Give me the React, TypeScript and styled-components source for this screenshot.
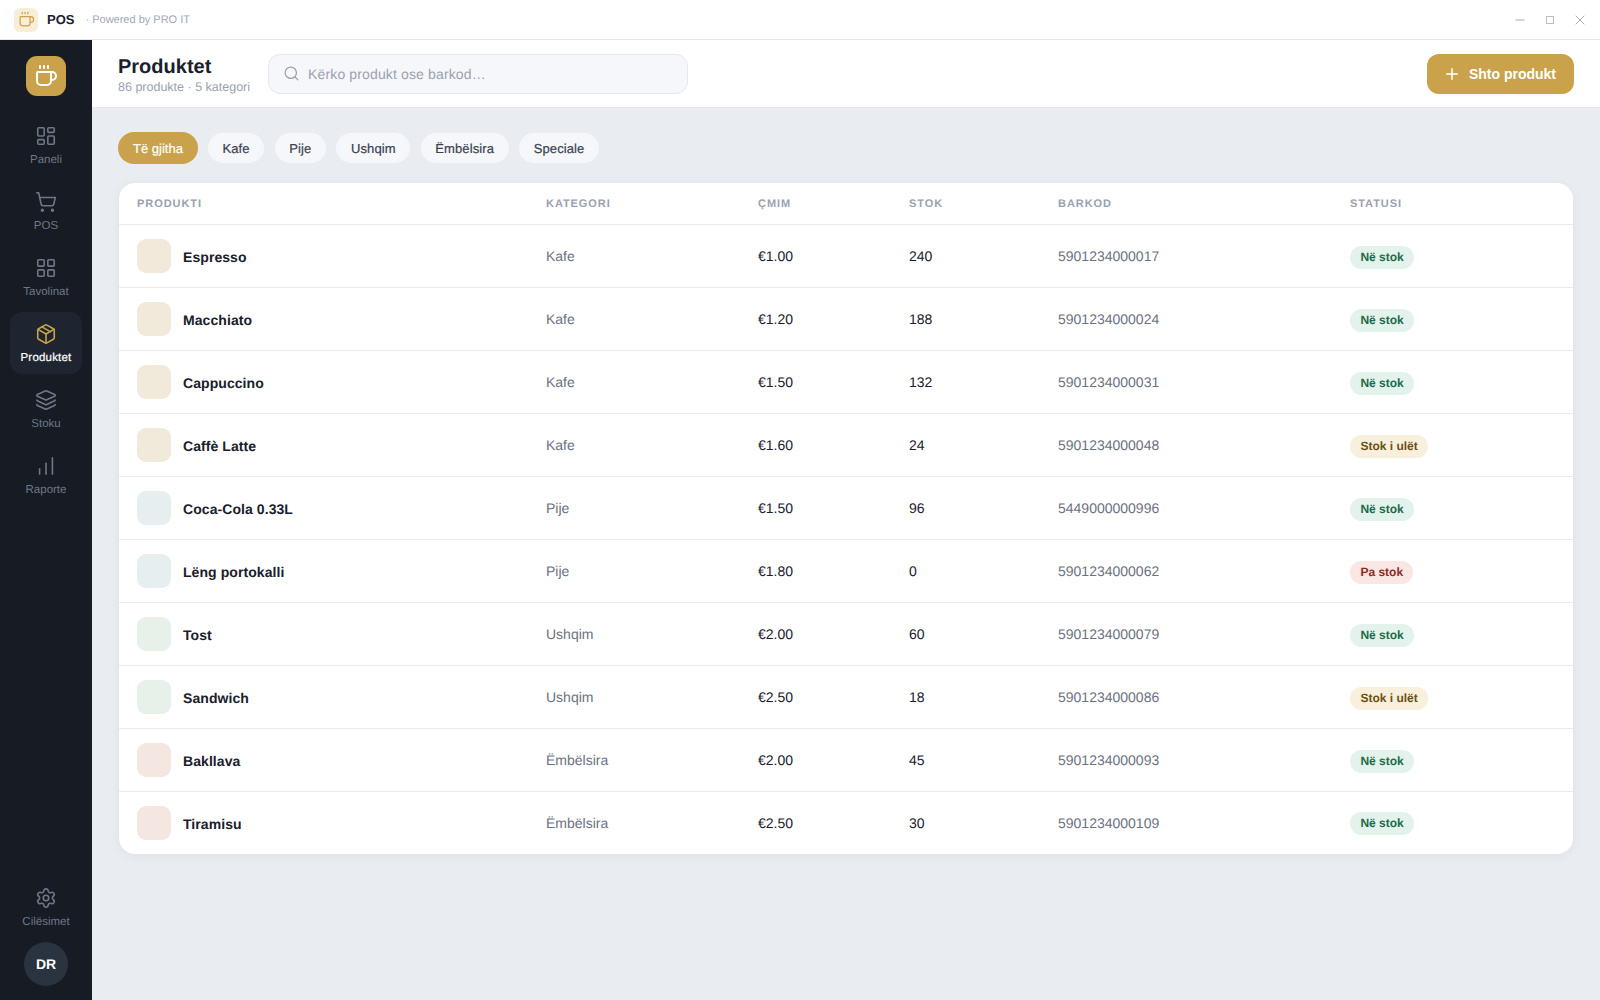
import {
  ChartNoAxesColumnIncreasing,
  Coffee,
  Layers,
  LayoutDashboard,
  LayoutGrid,
  LucideIcon,
  Minus,
  Package,
  Plus,
  Search,
  Settings,
  ShoppingCart,
  X,
} from "lucide-react";
import styled, { createGlobalStyle } from "styled-components";

type Status = "in" | "low" | "out";
type Tint = "coffee" | "drink" | "food" | "sweet";

type Product = {
  name: string;
  category: string;
  price: string;
  stock: number;
  barcode: string;
  status: Status;
  tint: Tint;
};

const products: Product[] = [
  { name: "Espresso", category: "Kafe", price: "€1.00", stock: 240, barcode: "5901234000017", status: "in", tint: "coffee" },
  { name: "Macchiato", category: "Kafe", price: "€1.20", stock: 188, barcode: "5901234000024", status: "in", tint: "coffee" },
  { name: "Cappuccino", category: "Kafe", price: "€1.50", stock: 132, barcode: "5901234000031", status: "in", tint: "coffee" },
  { name: "Caffè Latte", category: "Kafe", price: "€1.60", stock: 24, barcode: "5901234000048", status: "low", tint: "coffee" },
  { name: "Coca-Cola 0.33L", category: "Pije", price: "€1.50", stock: 96, barcode: "5449000000996", status: "in", tint: "drink" },
  { name: "Lëng portokalli", category: "Pije", price: "€1.80", stock: 0, barcode: "5901234000062", status: "out", tint: "drink" },
  { name: "Tost", category: "Ushqim", price: "€2.00", stock: 60, barcode: "5901234000079", status: "in", tint: "food" },
  { name: "Sandwich", category: "Ushqim", price: "€2.50", stock: 18, barcode: "5901234000086", status: "low", tint: "food" },
  { name: "Bakllava", category: "Ëmbëlsira", price: "€2.00", stock: 45, barcode: "5901234000093", status: "in", tint: "sweet" },
  { name: "Tiramisu", category: "Ëmbëlsira", price: "€2.50", stock: 30, barcode: "5901234000109", status: "in", tint: "sweet" },
];

const navItems: { label: string; icon: LucideIcon; active?: boolean }[] = [
  { label: "Paneli", icon: LayoutDashboard },
  { label: "POS", icon: ShoppingCart },
  { label: "Tavolinat", icon: LayoutGrid },
  { label: "Produktet", icon: Package, active: true },
  { label: "Stoku", icon: Layers },
  { label: "Raporte", icon: ChartNoAxesColumnIncreasing },
];

const chips = ["Të gjitha", "Kafe", "Pije", "Ushqim", "Ëmbëlsira", "Speciale"];
const columns = ["Produkti", "Kategori", "Çmim", "Stok", "Barkod", "Statusi"];
const columnWidths = [409, 212, 151, 149, 292, 241];

const statusLabels: Record<Status, string> = {
  in: "Në stok",
  low: "Stok i ulët",
  out: "Pa stok",
};
const statusColors: Record<Status, { bg: string; fg: string }> = {
  in: { bg: "#e3f3ec", fg: "#1c6b4a" },
  low: { bg: "#f8efdc", fg: "#6b4f14" },
  out: { bg: "#fae6e3", fg: "#8f2a1e" },
};
const tintColors: Record<Tint, string> = {
  coffee: "#f1e9d9",
  drink: "#e6eef0",
  food: "#e8f0ea",
  sweet: "#f4e7e1",
};

const GlobalStyle = createGlobalStyle`
  html, body {
    margin: 0;
    height: 100%;
  }
  body {
    font-family: "Liberation Sans", Arial, sans-serif;
    text-rendering: geometricPrecision;
    -webkit-font-smoothing: antialiased;
    background: #e9ecf1;
    color: #1a202c;
  }
  #root {
    height: 100%;
  }
`;

const Shell = styled.div`
  display: flex;
  flex-direction: column;
  height: 1000px;
  overflow: hidden;
`;
const TitleBar = styled.div`
  flex: none;
  display: flex;
  align-items: center;
  height: 40px;
  box-sizing: border-box;
  padding: 0 12px 0 14px;
  background: #fff;
  border-bottom: 1px solid #e4e7ec;
`;
const TitleLogo = styled.div`
  display: flex;
  align-items: center;
  justify-content: center;
  width: 24px;
  height: 24px;
  border-radius: 6px;
  background: #f8eed8;
  color: #c9a24b;
`;
const AppName = styled.span`
  margin-left: 9px;
  font-size: 13px;
  font-weight: 700;
  color: #1a202c;
`;
const Powered = styled.span`
  margin-left: 11px;
  font-size: 11px;
  color: #a0a8b5;
`;
const WindowControls = styled.div`
  margin-left: auto;
  display: flex;
  align-items: center;
  gap: 14px;
  color: #a6adb9;
`;
const WindowButton = styled.div`
  display: flex;
  align-items: center;
  justify-content: center;
  width: 16px;
  height: 16px;
`;
const MaximizeGlyph = styled.div`
  width: 6px;
  height: 6px;
  border: 1px solid #b8bec9;
`;
const Body = styled.div`
  flex: 1;
  display: flex;
  min-height: 0;
`;
const Sidebar = styled.aside`
  flex: none;
  width: 92px;
  display: flex;
  flex-direction: column;
  align-items: center;
  padding: 16px 0 14px;
  box-sizing: border-box;
  background: #161b24;
`;
const BrandMark = styled.div`
  display: flex;
  align-items: center;
  justify-content: center;
  width: 40px;
  height: 40px;
  border-radius: 11px;
  background: #c9a24b;
  color: #fff;
  margin-bottom: 18px;
`;
const Nav = styled.nav`
  display: flex;
  flex-direction: column;
  gap: 4px;
`;
const NavItem = styled.div<{ $active?: boolean }>`
  display: flex;
  flex-direction: column;
  align-items: center;
  justify-content: center;
  gap: 7px;
  width: 72px;
  height: 62px;
  box-sizing: border-box;
  border-radius: 12px;
  font-size: 11.5px;
  letter-spacing: ${({ $active }) => ($active ? "0.2px" : "0")};
  -webkit-text-stroke: ${({ $active }) => ($active ? "0.2px" : "0")};
  background: ${({ $active }) => ($active ? "#1f2530" : "transparent")};
  color: ${({ $active }) => ($active ? "#ffffff" : "#6f7786")};
  svg {
    color: ${({ $active }) => ($active ? "#c9a24b" : "#6f7786")};
  }
`;
const SidebarBottom = styled.div`
  margin-top: auto;
  display: flex;
  flex-direction: column;
  align-items: center;
  gap: 4px;
`;
const Avatar = styled.div`
  display: flex;
  align-items: center;
  justify-content: center;
  width: 44px;
  height: 44px;
  border-radius: 50%;
  background: #2a3441;
  color: #fff;
  font-size: 14px;
  font-weight: 700;
`;
const Main = styled.main`
  flex: 1;
  display: flex;
  flex-direction: column;
  min-width: 0;
`;
const Header = styled.header`
  flex: none;
  display: flex;
  align-items: center;
  height: 68px;
  box-sizing: border-box;
  padding: 0 26px;
  background: #fff;
  border-bottom: 1px solid #e4e7ec;
`;
const HeaderTitle = styled.div`
  margin-right: 18px;
  padding-top: 3px;
  h1 {
    margin: 0;
    font-size: 20px;
    line-height: 24px;
    font-weight: 700;
    color: #1a202c;
  }
  p {
    margin: 0;
    font-size: 12.5px;
    line-height: 16px;
    color: #99a1af;
  }
`;
const SearchBox = styled.div`
  display: flex;
  align-items: center;
  gap: 8px;
  width: 420px;
  height: 40px;
  box-sizing: border-box;
  padding: 0 14px;
  border: 1px solid #e4e7ec;
  border-radius: 12px;
  background: #f6f7fa;
  color: #9aa2b0;
  font-size: 14px;
  letter-spacing: 0.01em;
`;
const AddButton = styled.button`
  margin-left: auto;
  display: flex;
  align-items: center;
  gap: 8px;
  height: 40px;
  padding: 0 18px 0 16px;
  border: 0;
  border-radius: 12px;
  background: #c9a24b;
  color: #fff;
  font-family: inherit;
  font-size: 14px;
  font-weight: 700;
`;
const Content = styled.div`
  flex: 1;
  padding: 24px 27px 0 26px;
`;
const ChipRow = styled.div`
  display: flex;
  align-items: center;
  gap: 10.7px;
  margin-bottom: 19px;
`;
const Chip = styled.div<{ $active?: boolean }>`
  display: flex;
  align-items: center;
  box-sizing: border-box;
  height: ${({ $active }) => ($active ? "32px" : "30px")};
  padding: 0 ${({ $active }) => ($active ? "15px" : "14.5px")};
  margin-right: ${({ $active }) => ($active ? "-0.7px" : "0")};
  border-radius: 16px;
  font-size: 13px;
  letter-spacing: ${({ $active }) => ($active ? "0" : "0.1px")};
  -webkit-text-stroke: 0.2px;
  background: ${({ $active }) => ($active ? "#c9a24b" : "#f6f7fb")};
  color: ${({ $active }) => ($active ? "#ffffff" : "#3a4250")};
`;
const Card = styled.div`
  margin-left: 1px;
  background: #fff;
  border-radius: 16px;
  overflow: hidden;
  box-shadow: 0 2px 12px rgba(26, 32, 44, 0.05);
`;
const Table = styled.table`
  width: 100%;
  table-layout: fixed;
  border-collapse: collapse;
`;
const HeadCell = styled.th`
  height: 40px;
  padding: 1px 18px 0;
  text-align: left;
  font-size: 11px;
  font-weight: 700;
  letter-spacing: 0.085em;
  text-transform: uppercase;
  color: #9aa2b0;
  border-bottom: 1px solid #e8eaf0;
`;
const Row = styled.tr`
  height: 63px;
  border-bottom: 1px solid #e8eaf0;
  &:last-child {
    height: 62px;
    border-bottom: 0;
  }
`;
const Cell = styled.td<{ $muted?: boolean }>`
  padding: 0 18px;
  font-size: 14px;
  color: ${({ $muted }) => ($muted ? "#6b7280" : "#1a202c")};
`;
const ProductCell = styled.div`
  display: flex;
  align-items: center;
  gap: 12px;
  font-weight: 700;
  letter-spacing: 0.005em;
`;
const ProductName = styled.span`
  margin-top: 2px;
`;
const Thumb = styled.div<{ $tint: Tint }>`
  width: 34px;
  height: 34px;
  border-radius: 9px;
  background: ${({ $tint }) => tintColors[$tint]};
`;
const Badge = styled.span<{ $status: Status }>`
  display: inline-block;
  margin-top: 2px;
  padding: 4px 10.4px;
  border-radius: 12px;
  font-size: 12px;
  line-height: 15px;
  font-weight: 700;
  background: ${({ $status }) => statusColors[$status].bg};
  color: ${({ $status }) => statusColors[$status].fg};
`;

const App = () => (
  <Shell>
    <GlobalStyle />
    <TitleBar>
      <TitleLogo>
        <Coffee size={17} strokeWidth={1.75} />
      </TitleLogo>
      <AppName>POS</AppName>
      <Powered>· Powered by PRO IT</Powered>
      <WindowControls>
        <WindowButton><Minus size={14} /></WindowButton>
        <WindowButton><MaximizeGlyph /></WindowButton>
        <WindowButton><X size={16} strokeWidth={1.5} /></WindowButton>
      </WindowControls>
    </TitleBar>
    <Body>
      <Sidebar>
        <BrandMark>
          <Coffee size={24} strokeWidth={2} />
        </BrandMark>
        <Nav>
          {navItems.map((item) => (
            <NavItem key={item.label} $active={item.active}>
              <item.icon size={22} strokeWidth={1.75} />
              {item.label}
            </NavItem>
          ))}
        </Nav>
        <SidebarBottom>
          <NavItem>
            <Settings size={22} strokeWidth={1.75} />
            Cilësimet
          </NavItem>
          <Avatar>DR</Avatar>
        </SidebarBottom>
      </Sidebar>
      <Main>
        <Header>
          <HeaderTitle>
            <h1>Produktet</h1>
            <p>86 produkte · 5 kategori</p>
          </HeaderTitle>
          <SearchBox>
            <Search size={17} strokeWidth={1.75} />
            Kërko produkt ose barkod…
          </SearchBox>
          <AddButton>
            <Plus size={18} strokeWidth={2} />
            Shto produkt
          </AddButton>
        </Header>
        <Content>
          <ChipRow>
            {chips.map((chip, index) => (
              <Chip key={chip} $active={index === 0}>{chip}</Chip>
            ))}
          </ChipRow>
          <Card>
            <Table>
              <colgroup>
                {columnWidths.map((width, index) => (
                  <col key={index} width={width} />
                ))}
              </colgroup>
              <thead>
                <tr>
                  {columns.map((column) => (
                    <HeadCell key={column}>{column}</HeadCell>
                  ))}
                </tr>
              </thead>
              <tbody>
                {products.map((product) => (
                  <Row key={product.name}>
                    <Cell>
                      <ProductCell>
                        <Thumb $tint={product.tint} />
                        <ProductName>{product.name}</ProductName>
                      </ProductCell>
                    </Cell>
                    <Cell $muted>{product.category}</Cell>
                    <Cell>{product.price}</Cell>
                    <Cell>{product.stock}</Cell>
                    <Cell $muted>{product.barcode}</Cell>
                    <Cell>
                      <Badge $status={product.status}>{statusLabels[product.status]}</Badge>
                    </Cell>
                  </Row>
                ))}
              </tbody>
            </Table>
          </Card>
        </Content>
      </Main>
    </Body>
  </Shell>
);

export default App;
